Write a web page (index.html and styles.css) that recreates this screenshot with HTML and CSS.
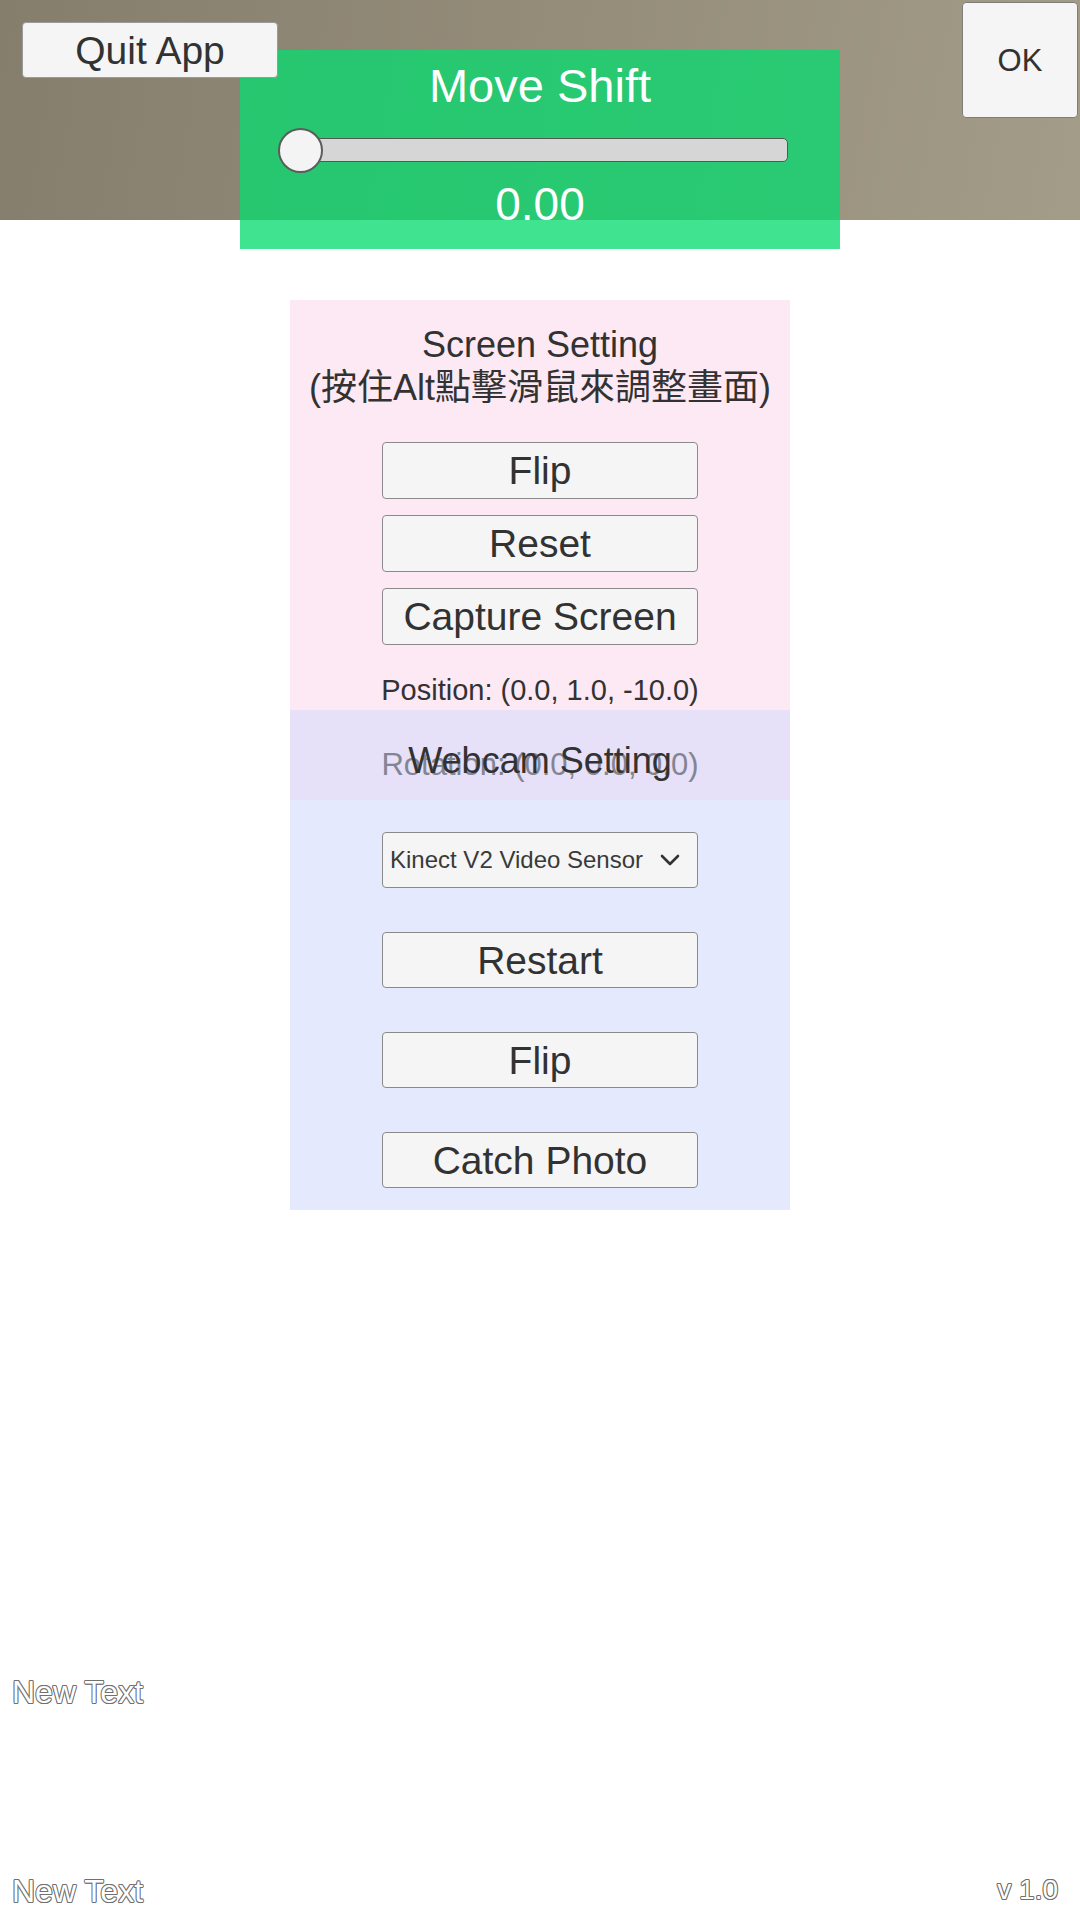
FILE: index.html
```html
<!DOCTYPE html>
<html lang="zh-Hant">
<head>
<meta charset="utf-8">
<title>Settings</title>
<link rel="stylesheet" href="styles.css">
</head>
<body>
<div class="page">
  <header class="top">
    <button class="btn quit">Quit App</button>
    <button class="btn ok">OK</button>
    <div class="shift">
      <div class="shift-title">Move Shift</div>
      <div class="slider">
        <div class="track"></div>
        <div class="knob"></div>
      </div>
      <div class="shift-val">0.00</div>
    </div>
  </header>

  <main class="panel">
    <section class="screen">
      <div class="title-line">Screen Setting</div>
      <div class="title-line">(按住Alt點擊滑鼠來調整畫面)</div>
      <div class="btn-stack">
        <button class="btn wide">Flip</button>
        <button class="btn wide">Reset</button>
        <button class="btn wide">Capture Screen</button>
      </div>
      <div class="info">Position: (0.0, 1.0, -10.0)</div>
    </section>

    <div class="webcam-head">
      <div class="info rot">Rotation: (0.0, 0.0, 0.0)</div>
      <div class="head-title">Webcam Setting</div>
    </div>

    <section class="webcam">
      <div class="dropdown">
        <span>Kinect V2 Video Sensor</span>
        <svg class="chev" width="20" height="12" viewBox="0 0 20 12"><path d="M2 2 L10 10 L18 2" fill="none" stroke="#333" stroke-width="2.6" stroke-linecap="round" stroke-linejoin="round"/></svg>
      </div>
      <button class="btn wide tall">Restart</button>
      <button class="btn wide tall">Flip</button>
      <button class="btn wide tall">Catch Photo</button>
    </section>
  </main>

  <div class="outline first">New Text</div>
  <footer class="foot">
    <div class="outline">New Text</div>
    <div class="outline ver">v 1.0</div>
  </footer>
</div>
</body>
</html>
```
FILE: styles.css
```css
* { box-sizing: border-box; }
html, body { margin: 0; padding: 0; }
body {
  width: 1080px;
  height: 1920px;
  overflow: hidden;
  background: #ffffff;
  font-family: "Liberation Sans", "Noto Sans CJK TC", Arial, sans-serif;
  color: #323232;
}
.page { width: 1080px; height: 1920px; display: flex; flex-direction: column; }

.btn {
  display: flex;
  align-items: center;
  justify-content: center;
  margin: 0;
  padding: 0;
  background: #f5f5f5;
  border: 1px solid #8a8a8a;
  border-radius: 4px;
  font-family: "Liberation Sans", Arial, sans-serif;
  color: #323232;
  line-height: 1;
  white-space: nowrap;
}

.top {
  position: relative;
  height: 220px;
  flex: none;
  display: flex;
  justify-content: space-between;
  align-items: flex-start;
  background: linear-gradient(100deg, #867e6d 0%, #938b78 45%, #a39c88 100%);
}
.quit {
  position: relative;
  z-index: 2;
  width: 256px;
  height: 56px;
  margin: 22px 0 0 22px;
  font-size: 39px;
  border-color: #9a9a9a;
}
.ok {
  width: 116px;
  height: 116px;
  margin: 2px 2px 0 0;
  font-size: 31px;
  border-color: #7d7d7d;
}

.shift {
  position: absolute;
  z-index: 1;
  left: 240px;
  top: 50px;
  width: 600px;
  height: 199px;
  background: rgba(6, 219, 110, 0.77);
  display: flex;
  flex-direction: column;
  align-items: center;
  padding-top: 12px;
  color: #ffffff;
}
.shift-title { font-size: 47px; line-height: 47px; }
.slider {
  position: relative;
  align-self: flex-start;
  margin: 29px 0 0 60px;
  width: 488px;
  height: 24px;
}
.track {
  height: 24px;
  background: #d6d6d6;
  border: 1px solid #4e5a52;
  border-radius: 5px;
}
.knob {
  position: absolute;
  left: -22px;
  top: -10px;
  width: 45px;
  height: 45px;
  border-radius: 50%;
  background: #f4f4f4;
  border: 2px solid #5c5c5c;
}
.shift-val { margin-top: 19px; font-size: 46px; line-height: 46px; }

.panel {
  width: 500px;
  margin: 80px auto 0;
  flex: none;
}
.screen {
  height: 410px;
  background: #fde9f4;
  padding-top: 23px;
  display: flex;
  flex-direction: column;
  align-items: center;
}
.title-line {
  height: 43px;
  font-size: 36px;
  line-height: 43px;
  white-space: nowrap;
}
.btn-stack {
  margin-top: 33px;
  display: flex;
  flex-direction: column;
  gap: 16px;
}
.wide { width: 316px; height: 57px; font-size: 39px; }
.info {
  margin-top: 28px;
  font-size: 29px;
  line-height: 34px;
  white-space: nowrap;
}

.webcam-head {
  height: 90px;
  background: #e6e0f8;
  display: grid;
  justify-items: center;
  align-items: start;
}
.webcam-head > * { grid-area: 1 / 1; }
.rot { margin-top: 37px; font-size: 31px; line-height: 36px; color: #838593; }
.head-title {
  margin-top: 29px;
  font-size: 36px;
  line-height: 43px;
  white-space: nowrap;
}

.webcam {
  height: 410px;
  background: #e5e9fd;
  padding-top: 32px;
  display: flex;
  flex-direction: column;
  align-items: center;
  gap: 44px;
}
.dropdown {
  width: 316px;
  height: 56px;
  background: #f5f5f5;
  border: 1px solid #8a8a8a;
  border-radius: 4px;
  display: flex;
  align-items: center;
  justify-content: space-between;
  padding: 0 17px 0 7px;
  font-size: 24px;
  color: #3a3a3a;
  white-space: nowrap;
}
.chev { display: block; }
.tall { height: 56px; }

.outline {
  font-size: 32px;
  line-height: 37px;
  color: #ffffff;
  text-shadow:
    -1px 0 0 #707070, 1px 0 0 #707070, 0 -1px 0 #707070, 0 1px 0 #707070,
    -0.7px -0.7px 0 #707070, 0.7px -0.7px 0 #707070, -0.7px 0.7px 0 #707070, 0.7px 0.7px 0 #707070;
  white-space: nowrap;
}
.first { margin: 464px 0 0 12px; }
.foot {
  margin-top: 162px;
  padding: 0 22px 0 12px;
  display: flex;
  justify-content: space-between;
  align-items: flex-start;
}
.ver { font-size: 28px; line-height: 34px; }
```
